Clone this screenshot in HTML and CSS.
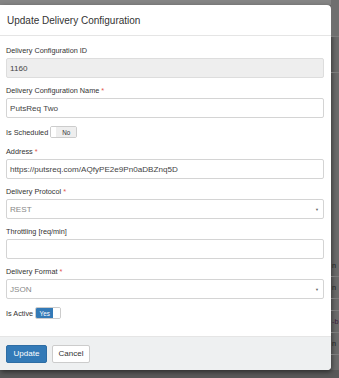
FILE: index.html
```html
<!DOCTYPE html>
<html lang="en">
<head>
    <meta charset="UTF-8">
    <meta name="viewport" content="width=device-width, initial-scale=1">
    <title>Update Delivery Configuration</title>
    <link rel="stylesheet" href="styles.css">
</head>
<body>
    <div class="screen">
        <div class="modal">
            <div class="modal-header">
                <h4>Update Delivery Configuration</h4>
            </div>
            <div class="modal-body">
                <div class="field">
                    <label>Delivery Configuration ID</label>
                    <div class="input readonly">1160</div>
                </div>
                <div class="field">
                    <label>Delivery Configuration Name <span class="req">*</span></label>
                    <div class="input">PutsReq Two</div>
                </div>
                <div class="switch-row">
                    <span>Is Scheduled</span>
                    <span class="switch off"><span class="knob"></span><span class="state">No</span></span>
                </div>
                <div class="field">
                    <label>Address <span class="req">*</span></label>
                    <div class="input">https://putsreq.com/AQfyPE2e9Pn0aDBZnq5D</div>
                </div>
                <div class="field">
                    <label>Delivery Protocol <span class="req">*</span></label>
                    <div class="input select">REST<span class="caret">&#9660;</span></div>
                </div>
                <div class="field">
                    <label>Throttling [req/min]</label>
                    <div class="input"></div>
                </div>
                <div class="field">
                    <label>Delivery Format <span class="req">*</span></label>
                    <div class="input select">JSON<span class="caret">&#9660;</span></div>
                </div>
                <div class="switch-row">
                    <span>Is Active</span>
                    <span class="switch on"><span class="state">Yes</span><span class="knob"></span></span>
                </div>
            </div>
            <div class="modal-footer">
                <button class="btn btn-primary">Update</button>
                <button class="btn">Cancel</button>
            </div>
        </div>
        <div class="page-edge">
            <div class="edge-row top">&nbsp;</div>
            <div class="edge-row">&nbsp;</div>
            <div class="edge-gap"></div>
            <div class="edge-row text">n</div>
            <div class="edge-row text">n</div>
            <div class="edge-row small">&nbsp;</div>
            <div class="edge-row text link">-b</div>
            <div class="edge-row text">n</div>
        </div>
    </div>
</body>
</html>
```

FILE: styles.css
```css
body {
    margin: 0;
    padding: 0;
    background-color: #666;
    font-family: "Liberation Sans", Arial, sans-serif;
    color: #333;
}

.screen {
    display: flex;
    height: 378px;
    background: linear-gradient(#858585 0, #858585 5px, #6b6b6b 5px, #6b6b6b 370px, #595959 370px);
}

.modal {
    width: 331px;
    height: 365px;
    margin-top: 5px;
    flex-shrink: 0;
    display: flex;
    flex-direction: column;
    background-color: #fff;
    border-radius: 0 4px 4px 0;
    box-shadow: 1px 2px 5px rgba(0, 0, 0, 0.5);
    overflow: hidden;
}

.modal-header {
    height: 30px;
    display: flex;
    align-items: center;
    padding-left: 7px;
    border-bottom: 1px solid #e5e5e5;
}

.modal-header h4 {
    margin: 0;
    font-size: 10px;
    font-weight: normal;
    color: #333;
}

.modal-body {
    flex: 1;
    padding: 10px 7px 0 6px;
}

.field {
    margin-bottom: 8px;
}

.field label {
    display: block;
    font-size: 7.3px;
    line-height: 10px;
    margin-bottom: 2px;
    color: #333;
}

.req {
    color: #e2574c;
}

.input {
    height: 20px;
    box-sizing: border-box;
    display: flex;
    align-items: center;
    padding: 0 3px;
    border: 1px solid #d4d4d4;
    border-radius: 2px;
    font-size: 8.1px;
    color: #444;
    background-color: #fff;
}

.input.readonly {
    background-color: #eee;
    border-color: #ddd;
}

.input.select {
    justify-content: space-between;
    color: #888;
}

.caret {
    font-size: 4px;
    color: #666;
    margin-right: 1px;
}

.switch-row {
    display: flex;
    align-items: center;
    height: 12px;
    margin-bottom: 9px;
    font-size: 7.3px;
}

.switch {
    display: inline-flex;
    height: 10px;
    margin-left: 2px;
    border: 1px solid #ccc;
    border-radius: 2px;
    overflow: hidden;
    font-size: 6.3px;
}

.switch .state {
    display: flex;
    align-items: center;
    justify-content: center;
}

.switch.off .knob {
    width: 5px;
    background-color: #fff;
}

.switch.off .state {
    width: 20px;
    background-color: #eee;
    color: #333;
}

.switch.on .state {
    width: 17px;
    background-color: #337ab7;
    color: #fff;
}

.switch.on .knob {
    width: 7px;
    background-color: #fff;
}

.modal-footer {
    height: 34px;
    box-sizing: border-box;
    display: flex;
    align-items: center;
    gap: 5px;
    padding: 0 6px;
    border-top: 1px solid #e5e5e5;
    background-color: #eef0f1;
}

.btn {
    height: 18px;
    width: 38px;
    padding: 0;
    border: 1px solid #ccc;
    border-radius: 2px;
    background-color: #fff;
    color: #333;
    font-family: "Liberation Sans", Arial, sans-serif;
    font-size: 8px;
}

.btn-primary {
    width: 41px;
    background-color: #337ab7;
    border-color: #2e6da4;
    color: #fff;
}

.page-edge {
    flex: 1;
    display: flex;
    flex-direction: column;
    overflow: hidden;
    font-size: 7.3px;
    color: #1c1c1c;
}

.edge-row {
    height: 35px;
    border-bottom: 1px solid #7c7c7c;
    padding-left: 1px;
    display: flex;
    align-items: center;
}

.edge-row.top {
    height: 36px;
    background-color: #6f6f6f;
}

.edge-gap {
    height: 182px;
}

.edge-row.text {
    height: 21px;
}

.edge-row.small {
    height: 11px;
}

.edge-row.link {
    color: #3a1a3a;
}
```
